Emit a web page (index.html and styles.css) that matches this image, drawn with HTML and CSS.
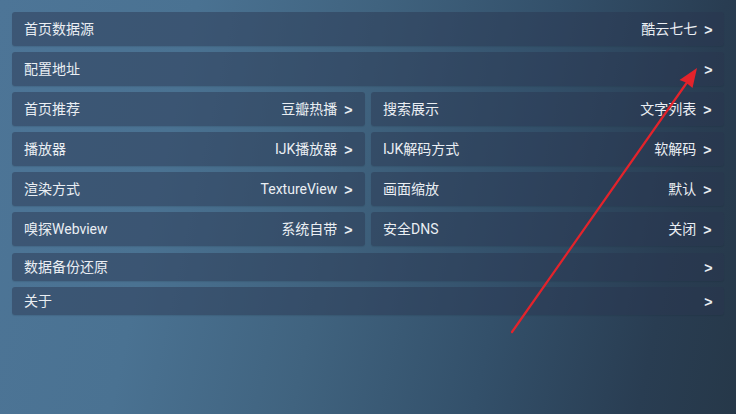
FILE: index.html
```html
<!DOCTYPE html>
<html lang="zh-CN">
<head>
<meta charset="utf-8">
<title>设置</title>
<link rel="stylesheet" href="styles.css">
</head>
<body>
<div class="screen">
  <div class="grid">
    <div class="item full tall"><span class="label">首页数据源</span><span class="value">酷云七七<span class="chev">&gt;</span></span></div>
    <div class="item full tall"><span class="label">配置地址</span><span class="value"><span class="chev">&gt;</span></span></div>
    <div class="item tall"><span class="label">首页推荐</span><span class="value">豆瓣热播<span class="chev">&gt;</span></span></div>
    <div class="item tall"><span class="label">搜索展示</span><span class="value">文字列表<span class="chev">&gt;</span></span></div>
    <div class="item tall"><span class="label">播放器</span><span class="value">IJK播放器<span class="chev">&gt;</span></span></div>
    <div class="item tall"><span class="label">IJK解码方式</span><span class="value">软解码<span class="chev">&gt;</span></span></div>
    <div class="item tall"><span class="label">渲染方式</span><span class="value">TextureView<span class="chev">&gt;</span></span></div>
    <div class="item tall"><span class="label">画面缩放</span><span class="value">默认<span class="chev">&gt;</span></span></div>
    <div class="item tall"><span class="label">嗅探Webview</span><span class="value">系统自带<span class="chev">&gt;</span></span></div>
    <div class="item tall"><span class="label">安全DNS</span><span class="value">关闭<span class="chev">&gt;</span></span></div>
    <div class="item full short first-short"><span class="label">数据备份还原</span><span class="value"><span class="chev">&gt;</span></span></div>
    <div class="item full short"><span class="label">关于</span><span class="value"><span class="chev">&gt;</span></span></div>
  </div>
  <svg class="arrow" width="736" height="414" viewBox="0 0 736 414" xmlns="http://www.w3.org/2000/svg">
    <line x1="512" y1="332" x2="688" y2="81" stroke="#e3232b" stroke-width="2.2" stroke-linecap="round"/>
    <polygon points="697,68 692.5,88 686,82.5 679.5,80" fill="#e3232b"/>
  </svg>
</div>
</body>
</html>
```
FILE: styles.css
```css
html, body {
  margin: 0;
  padding: 0;
}
body {
  width: 736px;
  height: 414px;
  overflow: hidden;
  font-family: Roboto, "Noto Sans CJK SC", "Noto Sans", sans-serif;
  color: #eaeef3;
}
.screen {
  position: relative;
  width: 736px;
  height: 414px;
  box-sizing: border-box;
  padding: 12px 12px 0 12px;
  background: linear-gradient(102deg, #4d7597 0%, #4a7292 24%, #40637f 46%, #33506a 68%, #293d52 88%, #263849 100%);
}
.grid {
  display: grid;
  grid-template-columns: 1fr 1fr;
  column-gap: 6px;
  row-gap: 6px;
}
.item {
  display: flex;
  align-items: center;
  justify-content: space-between;
  box-sizing: border-box;
  padding: 0 12px 0 12px;
  border-radius: 3px;
  background: rgba(42, 52, 78, 0.46);
  box-shadow: 0 1px 1px rgba(20, 30, 45, 0.12);
  font-size: 14px;
  line-height: 1;
}
.full {
  grid-column: 1 / span 2;
}
.tall {
  height: 34px;
}
.short {
  height: 28px;
}
.first-short {
  margin-top: 1px;
}
.grid .full .value {
  margin-right: -1px;
}
.label, .value {
  white-space: nowrap;
}
.value {
  display: flex;
  align-items: center;
}
.chev {
  display: inline-block;
  margin-left: 7px;
  font-family: "Liberation Sans", sans-serif;
  font-size: 15px;
  font-weight: 700;
  transform: scaleX(0.95);
}
.arrow {
  position: absolute;
  left: 0;
  top: 0;
  pointer-events: none;
}
```
